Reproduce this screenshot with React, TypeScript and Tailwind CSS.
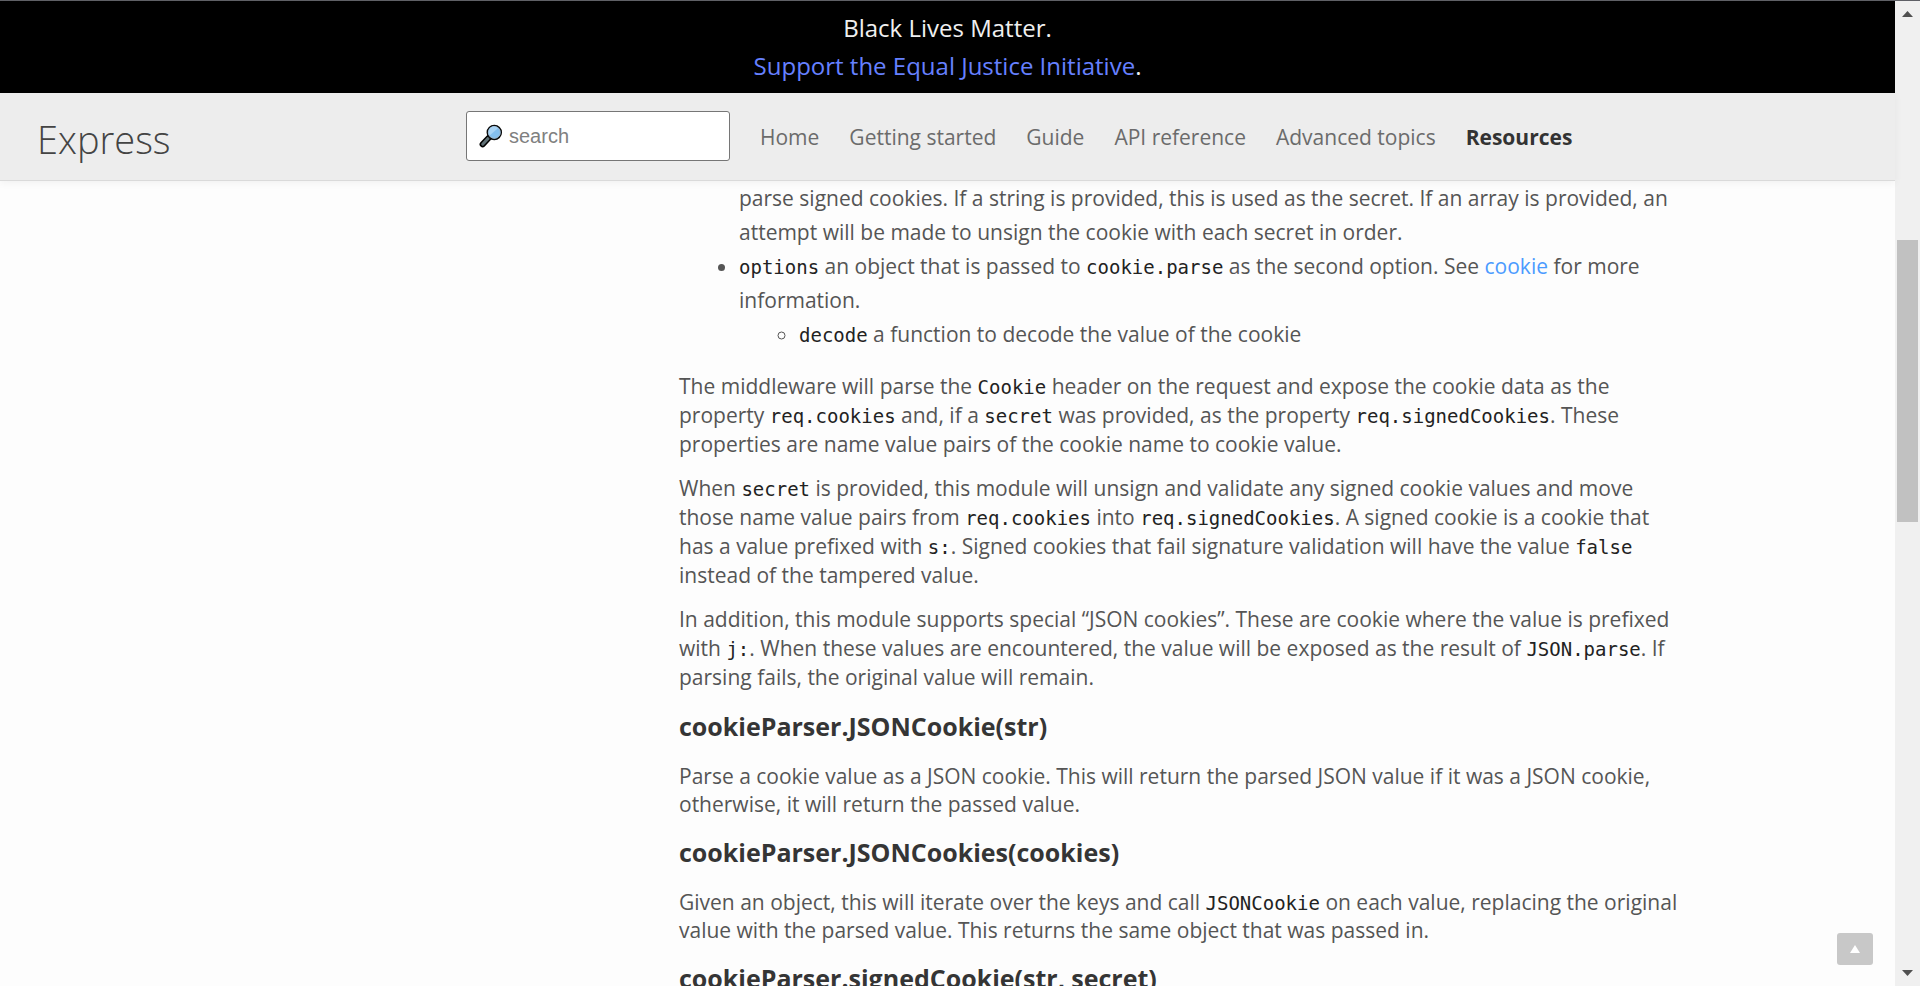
import type { ReactNode } from 'react';

const navItems = ['Home', 'Getting started', 'Guide', 'API reference', 'Advanced topics'];

function Code({ children }: { children: ReactNode }) {
  return <code className="font-['DejaVu_Sans_Mono',monospace] text-[19px] leading-none text-[#222]">{children}</code>;
}

function Para({ children }: { children: ReactNode }) {
  return <p className="mb-[15px] leading-[29px]">{children}</p>;
}

function Section({ title, children }: { title: string; children?: ReactNode }) {
  return (
    <section>
      <h3 className="mt-[17px] mb-[19px] text-[25px] leading-[34px] font-bold text-[#353535]">{title}</h3>
      <p className="leading-[28px]">{children}</p>
    </section>
  );
}

function SearchIcon() {
  return (
    <svg width="24" height="24" viewBox="0 0 24 24" aria-hidden="true" className="shrink-0">
      <path d="M9.6 14 3.6 20.4" stroke="#000" strokeWidth="6" strokeLinecap="round" />
      <path d="M9.2 14.4 3.7 20.2" stroke="#5f7075" strokeWidth="3" strokeLinecap="round" />
      <path d="M10.4 13.2 12 11.5" stroke="#000" strokeWidth="3" />
      <circle cx="15.3" cy="8.4" r="7" fill="#84bfee" stroke="#0a0a0a" strokeWidth="1.5" />
      <circle cx="15.3" cy="8.4" r="5.9" fill="none" stroke="#9db4c6" strokeWidth="0.9" />
      <path d="M10.9 11.3a5.3 5.3 0 0 1 8-7z" fill="#a9d4f5" />
    </svg>
  );
}

export default function App() {
  return (
    <div className="flex h-screen flex-col overflow-hidden border-t border-[#5f6066] bg-[#fdfdfd] font-['Open_Sans',sans-serif] text-[21px] text-[#555]">
      <div className="flex min-h-0 flex-1">
        <div className="flex min-w-0 flex-1 flex-col">
          <div className="bg-black py-2 text-center text-[24px] leading-[38px] text-[#f0f0f0]">
            <p>Black Lives Matter.</p>
            <p>
              <a href="#eji" className="text-[#6680ff]">Support the Equal Justice Initiative</a>.
            </p>
          </div>
          <header className="z-10 flex h-[88px] shrink-0 items-center border-b border-[#dadada] bg-[#ededed] shadow-[0_2px_8px_rgba(0,0,0,0.05)]">
            <a href="#home" className="w-[466px] shrink-0 pt-1.5 pl-[37px] text-[38px] font-light text-[#444]">Express</a>
            <label className="mb-[2px] flex h-[50px] w-[264px] shrink-0 items-center gap-[6px] rounded-[3px] border border-[#767676] bg-white pl-3">
              <SearchIcon />
              <input
                type="text"
                aria-label="search"
                placeholder="search"
                className="w-full min-w-0 bg-transparent font-['Liberation_Sans',sans-serif] text-[20px] outline-none placeholder:text-[#808080]"
              />
            </label>
            <nav className="flex gap-[30px] pt-[2px] pl-[30px] whitespace-nowrap text-[#6b6b6b]">
              {navItems.map((item) => (
                <a key={item} href="#nav">{item}</a>
              ))}
              <a href="#resources" className="font-bold text-[#333]">Resources</a>
            </nav>
          </header>
          <main className="min-h-0 flex-1 overflow-hidden pl-[679px]">
            <div className="max-w-[1005px]">
              <ul className="mb-[21px] list-disc pl-[60px] leading-[34px]">
                <li className="list-none">
                  parse signed cookies. If a string is provided, this is used as the secret. If an array is provided, an
                  attempt will be made to unsign the cookie with each secret in order.
                </li>
                <li>
                  <Code>options</Code> an object that is passed to <Code>cookie.parse</Code> as the second option. See{' '}
                  <a href="#cookie" className="text-[#4b9bff]">cookie</a> for more information.
                  <ul className="list-[circle] pl-[60px]">
                    <li><Code>decode</Code> a function to decode the value of the cookie</li>
                  </ul>
                </li>
              </ul>
              <Para>
                The middleware will parse the <Code>Cookie</Code> header on the request and expose the cookie data as the
                property <Code>req.cookies</Code> and, if a <Code>secret</Code> was provided, as the property{' '}
                <Code>req.signedCookies</Code>. These properties are name value pairs of the cookie name to cookie value.
              </Para>
              <Para>
                When <Code>secret</Code> is provided, this module will unsign and validate any signed cookie values and
                move those name value pairs from <Code>req.cookies</Code> into <Code>req.signedCookies</Code>. A signed
                cookie is a cookie that has a value prefixed with <Code>s:</Code>. Signed cookies that fail signature
                validation will have the value <Code>false</Code> instead of the tampered value.
              </Para>
              <Para>
                In addition, this module supports special “JSON cookies”. These are cookie where the value is prefixed
                with <Code>j:</Code>. When these values are encountered, the value will be exposed as the result of{' '}
                <Code>JSON.parse</Code>. If parsing fails, the original value will remain.
              </Para>
              <Section title="cookieParser.JSONCookie(str)">
                Parse a cookie value as a JSON cookie. This will return the parsed JSON value if it was a JSON cookie,
                otherwise, it will return the passed value.
              </Section>
              <Section title="cookieParser.JSONCookies(cookies)">
                Given an object, this will iterate over the keys and call <Code>JSONCookie</Code> on each value, replacing
                the original value with the parsed value. This returns the same object that was passed in.
              </Section>
              <Section title="cookieParser.signedCookie(str, secret)" />
            </div>
          </main>
        </div>
        <div className="flex w-[25px] shrink-0 flex-col items-center bg-[#f0f0f0] py-[10px]">
          <svg width="11" height="6" viewBox="0 0 11 6" aria-hidden="true"><path d="M0 6 5.5 0 11 6z" fill="#505050" /></svg>
          <div className="flex w-full flex-1 flex-col items-center pt-[223px]">
            <div className="h-[282px] w-[21px] bg-[#c1c1c1]" />
          </div>
          <svg width="11" height="6" viewBox="0 0 11 6" aria-hidden="true"><path d="M0 0 5.5 6 11 0z" fill="#505050" /></svg>
        </div>
      </div>
      <button
        type="button"
        aria-label="Back to top"
        className="fixed right-[47px] bottom-[21px] z-20 flex h-8 w-9 items-center justify-center rounded-[3px] bg-[#c8c8c8]"
      >
        <svg width="10" height="8" viewBox="0 0 10 8" aria-hidden="true"><path d="M0 8 5 0 10 8z" fill="#fff" /></svg>
      </button>
    </div>
  );
}
